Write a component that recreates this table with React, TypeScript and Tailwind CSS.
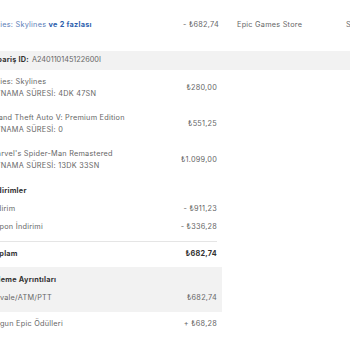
import React from "react";

interface LineItem {
    title: string;
    playtime: string;
    price: string;
}

const items: LineItem[] = [
    { title: "Cities: Skylines", playtime: "OYNAMA SÜRESİ: 4DK 47SN", price: "₺280,00" },
    { title: "Grand Theft Auto V: Premium Edition", playtime: "OYNAMA SÜRESİ: 0", price: "₺551,25" },
    { title: "Marvel's Spider-Man Remastered", playtime: "OYNAMA SÜRESİ: 13DK 33SN", price: "₺1.099,00" },
];

const App: React.FC = () => {
    return (
        <div className="w-[350px] h-[350px] overflow-hidden bg-white font-['Inter',sans-serif] text-[7.3px] text-[#666666] tracking-[0.25px]">
            <div className="-ml-[10px] w-[420px]">
                <div className="flex h-[51px] items-center">
                    <div className="w-[193px] text-[#5a7db8]">
                        Cities: Skylines <span className="font-bold text-[#2e5fae]">ve 2 fazlası</span>
                    </div>
                    <div className="w-[54px]">- ₺682,74</div>
                    <div className="w-[109px]">Epic Games Store</div>
                    <div>Satın Alındı</div>
                </div>

                <div className="flex h-[19px] items-center bg-[#f2f2f2]">
                    <span className="font-bold text-[#333333]">Sipariş ID:</span>
                    <span className="ml-[3px] tracking-[0px]">A240110145122600I</span>
                </div>

                <div className="w-[232px] pr-[5px]">
                    {items.map((item) => (
                        <div key={item.title} className="flex items-center justify-between py-[6px]">
                            <div className="leading-[12px]">
                                <p>{item.title}</p>
                                <p>{item.playtime}</p>
                            </div>
                            <span>{item.price}</span>
                        </div>
                    ))}

                    <div className="pt-[4px] pb-[4px] border-b border-[#e5e5e5]">
                        <div className="flex h-[18px] items-center font-bold text-[#333333]">İndirimler</div>
                        <div className="flex h-[18px] items-center justify-between">
                            <span>İndirim</span>
                            <span>- ₺911,23</span>
                        </div>
                        <div className="flex h-[19px] items-center justify-between">
                            <span>Kupon İndirimi</span>
                            <span>- ₺336,28</span>
                        </div>
                    </div>

                    <div className="flex h-[25px] items-center justify-between font-bold text-[#333333]">
                        <span>Toplam</span>
                        <span>₺682,74</span>
                    </div>
                </div>

                <div className="w-[232px] bg-[#f2f2f2] pt-[4px] pb-[4px] pr-[5px]">
                    <div className="flex h-[18px] items-center font-bold text-[#333333]">Ödeme Ayrıntıları</div>
                    <div className="flex h-[19px] items-center justify-between">
                        <span>Havale/ATM/PTT</span>
                        <span>₺682,74</span>
                    </div>
                </div>

                <div className="w-[232px] pr-[5px] flex h-[24px] items-center justify-between">
                    <span>Uygun Epic Ödülleri</span>
                    <span>+ ₺68,28</span>
                </div>
            </div>
        </div>
    );
};

export default App;
